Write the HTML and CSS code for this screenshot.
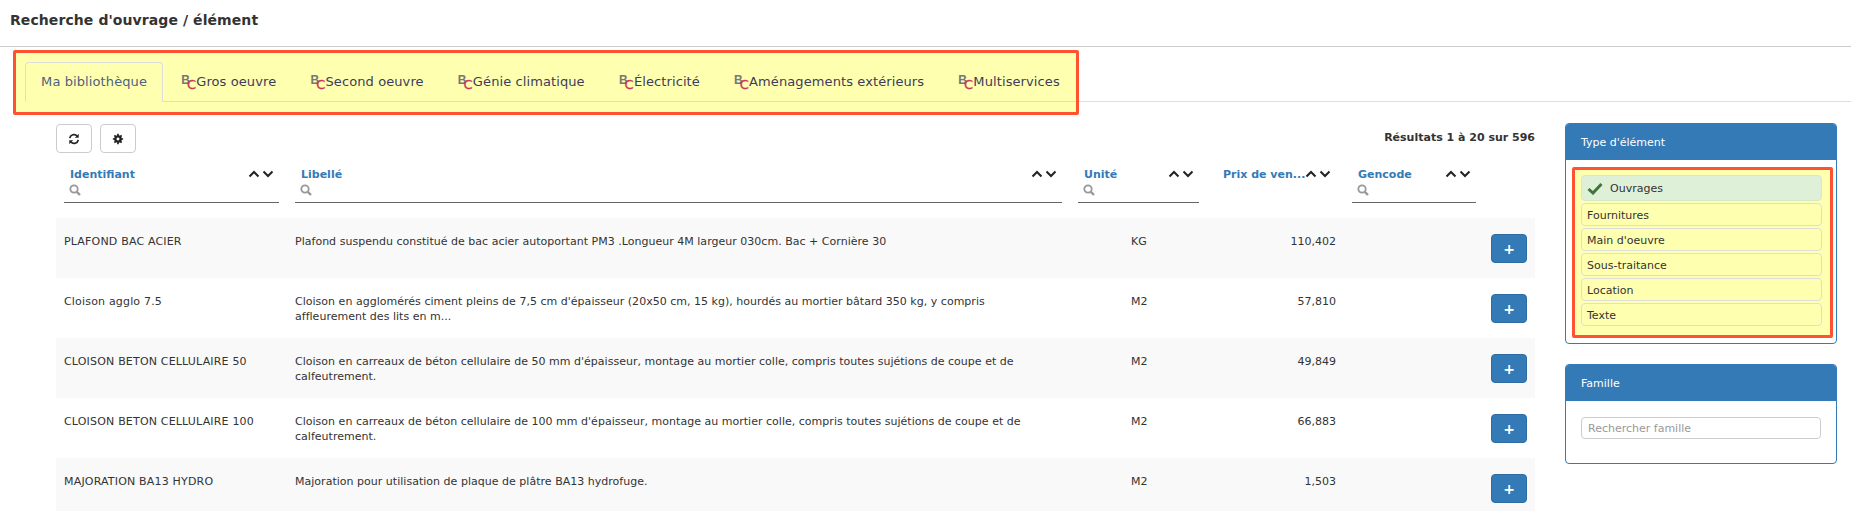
FILE: index.html
```html
<!DOCTYPE html>
<html lang="fr">
	<head>
		<meta charset="UTF-8">
		<title>Recherche d'ouvrage / élément</title>
		<link rel="stylesheet" href="styles.css">
	</head>
	<body>
		<svg class="defs" width="0" height="0">
			<symbol id="i-up" viewBox="0 0 12 8"><path d="M1.500 6.500 6 2l4.500 4.500" fill="none" stroke="currentColor" stroke-width="2"/></symbol>
			<symbol id="i-down" viewBox="0 0 12 8"><path d="M1.500 1.500 6 6l4.500-4.500" fill="none" stroke="currentColor" stroke-width="2"/></symbol>
			<symbol id="i-search" viewBox="0 0 12 12"><circle cx="5" cy="5" r="3.700" fill="none" stroke="currentColor" stroke-width="1.800"/><path d="M7.800 7.800 11 11" fill="none" stroke="currentColor" stroke-width="2.400"/></symbol>
		</svg>

		<header class="page-title">Recherche d'ouvrage / élément</header>

		<nav class="tabs-row">
			<div class="tabs-box">
				<ul class="tabs">
					<li class="tab active">Ma bibliothèque</li>
					<li class="tab"><span class="bc"><b>B</b><i>C</i></span>Gros oeuvre</li>
					<li class="tab"><span class="bc"><b>B</b><i>C</i></span>Second oeuvre</li>
					<li class="tab"><span class="bc"><b>B</b><i>C</i></span>Génie climatique</li>
					<li class="tab"><span class="bc"><b>B</b><i>C</i></span>Électricité</li>
					<li class="tab"><span class="bc"><b>B</b><i>C</i></span>Aménagements extérieurs</li>
					<li class="tab"><span class="bc"><b>B</b><i>C</i></span>Multiservices</li>
				</ul>
			</div>
			<div class="tabs-rest"></div>
		</nav>

		<div class="content">
			<main class="results">
				<div class="toolbar">
					<button class="tool-btn" type="button">
						<svg width="12" height="12" viewBox="0 0 14 14"><path d="M2 6a5 5 0 0 1 8.600-2.500M12 8a5 5 0 0 1-8.600 2.500" fill="none" stroke="#222" stroke-width="2"/><path d="M12.500 1v4.500H8zM1.500 13V8.500H6z" fill="#222"/></svg>
					</button>
					<button class="tool-btn" type="button">
						<svg width="12" height="12" viewBox="0 0 14 14"><circle cx="7" cy="7" r="3.200" fill="none" stroke="#222" stroke-width="2.600"/><path d="M7 1v12M1 7h12M2.800 2.800l8.400 8.400M11.200 2.800l-8.400 8.400" stroke="#222" stroke-width="2"/><circle cx="7" cy="7" r="1.700" fill="#fff"/></svg>
					</button>
					<span class="count">Résultats 1 à 20 sur 596</span>
				</div>

				<table class="grid">
					<colgroup>
						<col class="c-id"><col class="c-label"><col class="c-unit"><col class="c-price"><col class="c-gencode"><col class="c-action">
					</colgroup>
					<thead>
						<tr>
							<th>
								<div class="filter">
									<div class="filter-top"><span class="name">Identifiant</span><span class="sort"><svg><use href="#i-up"/></svg><svg><use href="#i-down"/></svg></span></div>
									<svg class="lens"><use href="#i-search"/></svg>
								</div>
							</th>
							<th>
								<div class="filter">
									<div class="filter-top"><span class="name">Libellé</span><span class="sort"><svg><use href="#i-up"/></svg><svg><use href="#i-down"/></svg></span></div>
									<svg class="lens"><use href="#i-search"/></svg>
								</div>
							</th>
							<th>
								<div class="filter">
									<div class="filter-top"><span class="name">Unité</span><span class="sort"><svg><use href="#i-up"/></svg><svg><use href="#i-down"/></svg></span></div>
									<svg class="lens"><use href="#i-search"/></svg>
								</div>
							</th>
							<th>
								<div class="filter plain">
									<div class="filter-top"><span class="name">Prix de ven...</span><span class="sort"><svg><use href="#i-up"/></svg><svg><use href="#i-down"/></svg></span></div>
								</div>
							</th>
							<th>
								<div class="filter">
									<div class="filter-top"><span class="name">Gencode</span><span class="sort"><svg><use href="#i-up"/></svg><svg><use href="#i-down"/></svg></span></div>
									<svg class="lens"><use href="#i-search"/></svg>
								</div>
							</th>
							<th></th>
						</tr>
					</thead>
					<tbody>
						<tr>
							<td class="ident">PLAFOND BAC ACIER</td>
							<td class="label">Plafond suspendu constitué de bac acier autoportant PM3 .Longueur 4M largeur 030cm. Bac + Cornière 30</td>
							<td class="unit">KG</td>
							<td class="price">110,402</td>
							<td></td>
							<td class="act"><button class="add-btn" type="button">+</button></td>
						</tr>
						<tr>
							<td class="ident">Cloison agglo 7.5</td>
							<td class="label">Cloison en agglomérés ciment pleins de 7,5 cm d'épaisseur (20x50 cm, 15 kg), hourdés au mortier bâtard 350 kg, y compris affleurement des lits en m...</td>
							<td class="unit">M2</td>
							<td class="price">57,810</td>
							<td></td>
							<td class="act"><button class="add-btn" type="button">+</button></td>
						</tr>
						<tr>
							<td class="ident">CLOISON BETON CELLULAIRE 50</td>
							<td class="label">Cloison en carreaux de béton cellulaire de 50 mm d'épaisseur, montage au mortier colle, compris toutes sujétions de coupe et de calfeutrement.</td>
							<td class="unit">M2</td>
							<td class="price">49,849</td>
							<td></td>
							<td class="act"><button class="add-btn" type="button">+</button></td>
						</tr>
						<tr>
							<td class="ident">CLOISON BETON CELLULAIRE 100</td>
							<td class="label">Cloison en carreaux de béton cellulaire de 100 mm d'épaisseur, montage au mortier colle, compris toutes sujétions de coupe et de calfeutrement.</td>
							<td class="unit">M2</td>
							<td class="price">66,883</td>
							<td></td>
							<td class="act"><button class="add-btn" type="button">+</button></td>
						</tr>
						<tr>
							<td class="ident">MAJORATION BA13 HYDRO</td>
							<td class="label">Majoration pour utilisation de plaque de plâtre BA13 hydrofuge.</td>
							<td class="unit">M2</td>
							<td class="price">1,503</td>
							<td></td>
							<td class="act"><button class="add-btn" type="button">+</button></td>
						</tr>
					</tbody>
				</table>
			</main>

			<aside class="side">
				<section class="panel">
					<h3 class="panel-head">Type d'élément</h3>
					<div class="type-box">
						<ul class="type-list">
							<li class="type selected">
								<svg width="16" height="13" viewBox="0 0 16 13"><path d="M1.500 7 6 11 14.500 2" fill="none" stroke="#3c763d" stroke-width="3"/></svg>
								Ouvrages
							</li>
							<li class="type">Fournitures</li>
							<li class="type">Main d'oeuvre</li>
							<li class="type">Sous-traitance</li>
							<li class="type">Location</li>
							<li class="type">Texte</li>
						</ul>
					</div>
				</section>
				<section class="panel">
					<h3 class="panel-head">Famille</h3>
					<div class="panel-body">
						<input class="family" type="text" placeholder="Rechercher famille">
					</div>
				</section>
			</aside>
		</div>
	</body>
</html>
```

FILE: styles.css
```css
html, body {
	height: 511px;
	overflow: hidden;
}
body {
	margin: 0;
	font-family: "DejaVu Sans", sans-serif;
	font-size: 11px;
	color: #333;
	background: #fff;
}
.defs {
	display: block;
	height: 0;
}
ul {
	list-style: none;
	margin: 0;
	padding: 0;
}
.page-title {
	height: 47px;
	padding: 12px 0 0 10px;
	box-sizing: border-box;
	border-bottom: 1px solid #ccc;
	font-size: 14px;
	font-weight: 700;
	line-height: 17px;
	letter-spacing: 0.08px;
	color: #333;
}
.tabs-row {
	display: flex;
	align-items: flex-start;
	margin-top: 3px;
}
.tabs-box {
	flex: none;
	margin-left: 13px;
	padding: 9px 0 10px 9px;
	background: #ffffb0;
	border: 3px solid #ff5230;
	border-radius: 2px;
}
.tabs-rest {
	flex: 1;
	height: 51px;
	border-bottom: 1px solid #ddd;
}
.tabs {
	display: flex;
	gap: 2px;
	border-bottom: 1px solid #ddd;
}
.tab {
	height: 40px;
	box-sizing: border-box;
	padding: 0 15.1px;
	margin-bottom: -1px;
	border: 1px solid transparent;
	border-radius: 4px 4px 0 0;
	font-size: 13px;
	line-height: 38px;
	letter-spacing: 0.1px;
	color: #3c3c5c;
	white-space: nowrap;
}
.tab.active {
	border-color: #ddd;
	border-bottom-color: #ffffb0;
	color: #4f5f80;
}
.bc {
	display: inline-block;
	width: 15px;
	line-height: 1;
	letter-spacing: 0;
}
.bc b {
	font-family: "Liberation Sans", sans-serif;
	font-size: 12px;
	color: #777;
	vertical-align: 2px;
}
.bc i {
	margin-left: -3px;
	font-size: 13px;
	font-style: normal;
	color: #c9375a;
	-webkit-text-stroke: 0.3px #c9375a;
	vertical-align: -3px;
}
.content {
	display: flex;
	align-items: flex-start;
	padding-top: 8px;
}
.results {
	flex: none;
	width: 1479px;
	margin: 1px 0 0 56px;
}
.toolbar {
	display: flex;
	align-items: center;
	gap: 8px;
	height: 29px;
}
.tool-btn {
	display: flex;
	align-items: center;
	justify-content: center;
	width: 36px;
	height: 29px;
	padding: 0;
	background: #fff;
	border: 1px solid #ccc;
	border-radius: 4px;
}
.count {
	margin-left: auto;
	font-weight: 700;
	color: #333;
	align-self: flex-start;
	line-height: 27px;
}
.grid {
	width: 100%;
	table-layout: fixed;
	border-collapse: collapse;
}
.c-id { width: 231px; }
.c-label { width: 783px; }
.c-unit { width: 137px; }
.c-price { width: 137px; }
.c-gencode { width: 140px; }
.c-action { width: 51px; }
th {
	height: 65px;
	box-sizing: border-box;
	padding: 0 0 15px;
	vertical-align: bottom;
	font-weight: 700;
	text-align: left;
}
.filter {
	height: 38px;
	box-sizing: border-box;
	margin: 0 8px;
	padding-top: 1px;
	border-bottom: 1px solid #666;
}
.filter.plain {
	border-bottom: none;
	padding-left: 2px;
}
.filter-top {
	display: flex;
	justify-content: space-between;
	align-items: center;
	padding-left: 6px;
	height: 16px;
	white-space: nowrap;
}
.name {
	color: #337ab7;
}
.sort {
	display: flex;
	flex: none;
	gap: 2px;
	padding-right: 5px;
	color: #222;
}
.sort svg {
	width: 12px;
	height: 8px;
}
.lens {
	display: block;
	width: 12px;
	height: 12px;
	margin: 2px 0 0 5px;
	color: #999;
}
td {
	height: 60px;
	box-sizing: border-box;
	padding: 16px 8px 0;
	vertical-align: top;
	line-height: 15px;
	color: #333;
}
tbody tr:nth-child(odd) td {
	background: #f9f9f9;
}
.ident {
	letter-spacing: 0.18px;
}
.label {
	padding-right: 16px;
	letter-spacing: 0.02px;
}
.unit {
	padding-left: 61px;
}
.price {
	text-align: right;
}
.act {
	padding: 16px 8px 0 0;
}
.add-btn {
	display: block;
	width: 36px;
	height: 29px;
	margin-left: auto;
	padding: 0;
	background: #337ab7;
	border: 1px solid #2e6da4;
	border-radius: 4px;
	font-family: "DejaVu Sans", sans-serif;
	font-size: 14px;
	font-weight: 700;
	line-height: 1;
	color: #fff;
}
.side {
	flex: none;
	width: 272px;
	margin-left: 30px;
	display: flex;
	flex-direction: column;
	gap: 20px;
}
.panel {
	box-sizing: border-box;
	border: 1px solid #337ab7;
	border-radius: 4px;
	overflow: hidden;
}
.panel-head {
	margin: 0;
	height: 36px;
	padding: 0 15px;
	background: #337ab7;
	font-size: 11px;
	font-weight: 400;
	line-height: 37px;
	color: #fff;
}
.type-box {
	margin: 7px 3px 5px 6px;
	padding: 5px 8px 9px 6px;
	background: #ffffb0;
	border: 3px solid #ff5230;
	border-radius: 2px;
}
.type-list {
	display: flex;
	flex-direction: column;
	gap: 2px;
}
.type {
	height: 23px;
	box-sizing: border-box;
	padding-left: 5px;
	border: 1px solid #ddd;
	border-radius: 4px;
	line-height: 23px;
	color: #333;
}
.type.selected {
	display: flex;
	align-items: center;
	gap: 7px;
	height: 26px;
	padding-top: 1px;
	background: #dff0d8;
	border-color: #d6e9c6;
}
.panel-body {
	padding: 16px 15px 24px;
}
.family {
	display: block;
	width: 100%;
	height: 22px;
	box-sizing: border-box;
	padding: 0 6px;
	border: 1px solid #ccc;
	border-radius: 4px;
	font-family: "DejaVu Sans", sans-serif;
	font-size: 11px;
}
.family::placeholder {
	color: #999;
}
```
